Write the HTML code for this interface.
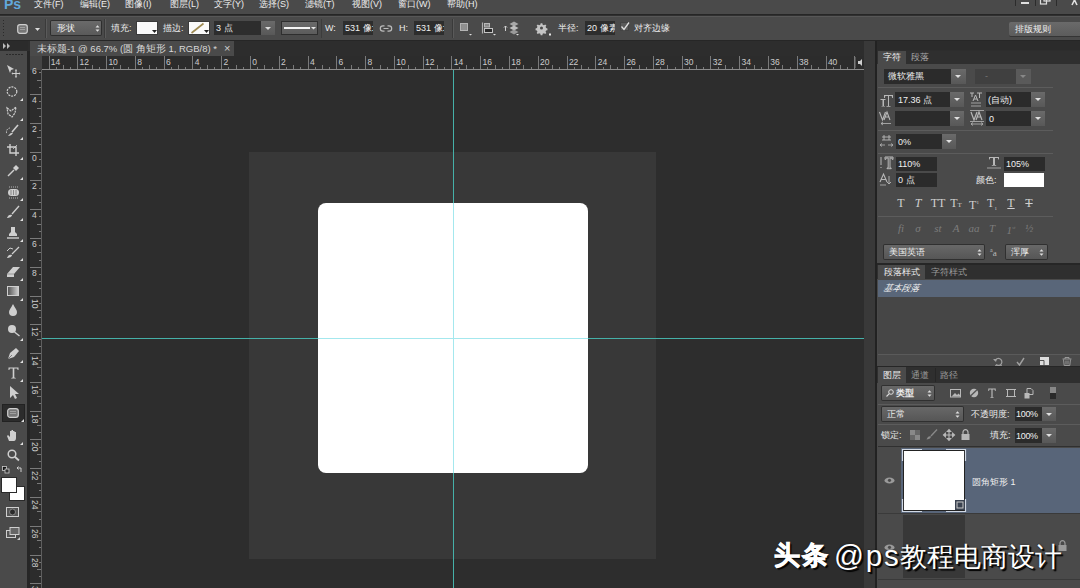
<!DOCTYPE html>
<html><head><meta charset="utf-8"><style>
*{margin:0;padding:0;box-sizing:border-box}
html,body{width:1080px;height:588px;overflow:hidden;background:#2d2d2d;font-family:"Liberation Sans",sans-serif;color:#d4d4d4;position:relative}
.a{position:absolute}
.t{position:absolute;white-space:nowrap;font-size:10px;line-height:12px;color:#d8d8d8}
svg.a{overflow:visible}
</style></head><body>
<div class="a" style="left:0px;top:0px;width:1080px;height:14px;background:#4a4a4a;"></div>
<div class="a" style="left:0px;top:14px;width:1080px;height:1px;background:#262626;"></div>
<div class="a" style="left:0px;top:15px;width:1080px;height:1px;background:#303030;"></div>
<div class="t" style="left:4px;top:-3px;font-size:14px;color:#62a8dc;font-weight:bold;line-height:14px;letter-spacing:0px">Ps</div>
<div class="t" style="left:34px;top:-2px;font-size:9px;color:#ececec;">文件(F)</div>
<div class="t" style="left:80px;top:-2px;font-size:9px;color:#ececec;">编辑(E)</div>
<div class="t" style="left:125px;top:-2px;font-size:9px;color:#ececec;">图像(I)</div>
<div class="t" style="left:170px;top:-2px;font-size:9px;color:#ececec;">图层(L)</div>
<div class="t" style="left:214px;top:-2px;font-size:9px;color:#ececec;">文字(Y)</div>
<div class="t" style="left:259px;top:-2px;font-size:9px;color:#ececec;">选择(S)</div>
<div class="t" style="left:305px;top:-2px;font-size:9px;color:#ececec;">滤镜(T)</div>
<div class="t" style="left:352px;top:-2px;font-size:9px;color:#ececec;">视图(V)</div>
<div class="t" style="left:398px;top:-2px;font-size:9px;color:#ececec;">窗口(W)</div>
<div class="t" style="left:447px;top:-2px;font-size:9px;color:#ececec;">帮助(H)</div>
<div class="a" style="left:1015px;top:0px;width:1px;height:6px;background:#2c2c2c;"></div>
<div class="a" style="left:1035px;top:0px;width:1px;height:6px;background:#2c2c2c;"></div>
<div class="a" style="left:1056px;top:0px;width:1px;height:6px;background:#2c2c2c;"></div>
<div class="a" style="left:1021px;top:2px;width:8px;height:2px;background:#e0e0e0;"></div>
<svg class="a" style="left:1040px;top:0px;" width="11" height="5" viewBox="0 0 11 5"><rect x="0.5" y="-2" width="6" height="6" fill="none" stroke="#ddd" stroke-width="1.2"/><rect x="4" y="-4" width="6" height="5" fill="none" stroke="#ddd" stroke-width="1.2"/></svg>
<svg class="a" style="left:1070px;top:0px;" width="9" height="5" viewBox="0 0 9 5"><path d="M0 -4 L4.5 0 L9 -4 M4.5 0 L2 5 M4.5 0 L7 5" stroke="#e0e0e0" stroke-width="1.6" fill="none"/></svg>
<div class="a" style="left:0px;top:16px;width:1080px;height:24px;background:#4a4a4a;"></div>
<div class="a" style="left:0px;top:16px;width:1080px;height:1px;background:#575757;"></div>
<div class="a" style="left:0px;top:40px;width:1080px;height:1px;background:#262626;"></div>
<div class="a" style="left:3px;top:20px;width:1px;height:1px;background:#2a2a2a;"></div>
<div class="a" style="left:3px;top:23px;width:1px;height:1px;background:#2a2a2a;"></div>
<div class="a" style="left:3px;top:26px;width:1px;height:1px;background:#2a2a2a;"></div>
<div class="a" style="left:3px;top:29px;width:1px;height:1px;background:#2a2a2a;"></div>
<div class="a" style="left:3px;top:32px;width:1px;height:1px;background:#2a2a2a;"></div>
<div class="a" style="left:3px;top:35px;width:1px;height:1px;background:#2a2a2a;"></div>
<svg class="a" style="left:17px;top:24px;" width="11" height="10" viewBox="0 0 11 10"><rect x="0.7" y="0.7" width="9.6" height="8.6" rx="2.2" fill="#777" stroke="#cfcfcf" stroke-width="1.2"/><path d="M3 3.5h5M3 5.5h5" stroke="#aaa" stroke-width="0.8"/></svg>
<svg class="a" style="left:35px;top:28px;" width="5" height="3" viewBox="0 0 5 3"><path d="M0 0h5l-2.5 3z" fill="#ddd"/></svg>
<div class="a" style="left:45px;top:19px;width:1px;height:19px;background:#3a3a3a;"></div>
<div class="a" style="left:46px;top:19px;width:1px;height:19px;background:#5a5a5a;"></div>
<div class="a" style="left:51px;top:21px;width:50px;height:14px;background:linear-gradient(#6a6a6a,#5a5a5a);border-radius:1px;box-shadow:0 0 0 1px #2e2e2e"></div>
<div class="t" style="left:57px;top:22px;font-size:9px;color:#efefef;">形状</div>
<svg class="a" style="left:95px;top:24px;" width="6" height="9" viewBox="0 0 6 9"><path d="M0.5 3.5h4L2.5 1.2zM0.5 5.5h4L2.5 7.8z" fill="#e0e0e0"/></svg>
<div class="a" style="left:104px;top:19px;width:1px;height:19px;background:#3a3a3a;"></div>
<div class="a" style="left:105px;top:19px;width:1px;height:19px;background:#5a5a5a;"></div>
<div class="t" style="left:111px;top:22px;font-size:9px;color:#ececec;">填充:</div>
<div class="a" style="left:137px;top:22px;width:20px;height:12px;background:#fafafa;box-shadow:0 0 0 1px #3a3a3a"></div>
<svg class="a" style="left:152px;top:30px;" width="5" height="3" viewBox="0 0 5 3"><path d="M0 0h5l-2.5 3z" fill="#222"/></svg>
<div class="t" style="left:163px;top:22px;font-size:9px;color:#ececec;">描边:</div>
<div class="a" style="left:189px;top:22px;width:20px;height:12px;background:#fafafa;box-shadow:0 0 0 1px #3a3a3a"></div>
<svg class="a" style="left:189px;top:22px;" width="20" height="12" viewBox="0 0 20 12"><path d="M2.5 11 L14.5 1.5" stroke="#9e8a52" stroke-width="1.6"/><path d="M15 8h5l-2.5 3z" fill="#222"/></svg>
<div class="a" style="left:214px;top:21px;width:47px;height:14px;background:#2d2d2d;"></div>
<div class="t" style="left:216px;top:22px;font-size:9px;color:#ececec;">3 点</div>
<div class="a" style="left:261px;top:21px;width:14px;height:14px;background:linear-gradient(#6a6a6a,#585858);"></div>
<svg class="a" style="left:265px;top:27px;" width="6" height="3" viewBox="0 0 6 3"><path d="M0 0h6l-3 3z" fill="#ddd"/></svg>
<div class="a" style="left:281px;top:21px;width:37px;height:14px;background:#2e2e2e;"></div>
<div class="a" style="left:282px;top:22px;width:35px;height:12px;background:linear-gradient(#6a6a6a,#5c5c5c);"></div>
<div class="a" style="left:284px;top:27px;width:26px;height:2px;background:#f4f4f4;"></div>
<svg class="a" style="left:311px;top:27px;" width="5" height="3" viewBox="0 0 5 3"><path d="M0 0h5l-2.5 2.5z" fill="#e6e6e6"/></svg>
<div class="a" style="left:321px;top:19px;width:1px;height:19px;background:#3c3c3c;"></div>
<div class="t" style="left:325px;top:22px;font-size:9px;color:#ececec;">W:</div>
<div class="a" style="left:343px;top:21px;width:30px;height:14px;background:#2d2d2d;"></div>
<div class="t" style="left:345px;top:22px;font-size:9px;color:#f0f0f0;width:28px;overflow:hidden">531 像:</div>
<svg class="a" style="left:380px;top:25px;" width="12" height="7" viewBox="0 0 12 7"><path d="M4.5 0.8H3A2.7 2.7 0 0 0 3 6.2H4.5M7.5 0.8H9A2.7 2.7 0 0 1 9 6.2H7.5M3.5 3.5H8.5" stroke="#bbb" stroke-width="1.2" fill="none"/></svg>
<div class="t" style="left:399px;top:22px;font-size:9px;color:#ececec;">H:</div>
<div class="a" style="left:414px;top:21px;width:30px;height:14px;background:#2d2d2d;"></div>
<div class="t" style="left:416px;top:22px;font-size:9px;color:#f0f0f0;width:28px;overflow:hidden">531 像:</div>
<div class="a" style="left:452px;top:19px;width:1px;height:19px;background:#3a3a3a;"></div>
<div class="a" style="left:453px;top:19px;width:1px;height:19px;background:#5a5a5a;"></div>
<svg class="a" style="left:459px;top:22px;" width="14" height="14" viewBox="0 0 14 14"><rect x="1.5" y="1.5" width="7" height="7" fill="#8c8c8c" stroke="#b4b4b4"/><path d="M4 2v6M6 2v6" stroke="#9c9c9c" stroke-width="0.6"/><path d="M10 12h3l-1.5 1.5z" fill="#e0e0e0"/></svg>
<svg class="a" style="left:481px;top:22px;" width="16" height="14" viewBox="0 0 16 14"><path d="M1.5 0.5v11" stroke="#b0b0b0" stroke-width="1.2"/><rect x="3.5" y="1.5" width="5" height="3.5" fill="#888" stroke="#b8b8b8"/><rect x="3.5" y="6.5" width="8" height="4" fill="#2a2a2a" stroke="#c4c4c4"/><path d="M12 12h3l-1.5 1.5z" fill="#e0e0e0"/></svg>
<svg class="a" style="left:503px;top:21px;" width="18" height="15" viewBox="0 0 18 15"><path d="M2.5 5v5M1 6.5l1.5-1.5 1.5 1.5" stroke="#cfcfcf" stroke-width="1" fill="none"/><path d="M11 0.5l4.5 2.5-4.5 2.5-4.5-2.5z" fill="#a8a8a8"/><path d="M11 4.5l4.5 2.5-4.5 2.5-4.5-2.5z" fill="#bdbdbd"/><path d="M11 8.5l4.5 2.5-4.5 2.5-4.5-2.5z" fill="#9a9a9a"/><path d="M13 13h3l-1.5 1.5z" fill="#e0e0e0"/></svg>
<svg class="a" style="left:535px;top:22px;" width="16" height="14" viewBox="0 0 16 14"><g transform="translate(6.5,6) scale(0.85)"><path d="M-1 -5.5h2l0.4 1.6 1.5 0.6 1.4-0.9 1.4 1.4-0.9 1.4 0.6 1.5 1.6 0.4v2l-1.6 0.4-0.6 1.5 0.9 1.4-1.4 1.4-1.4-0.9-1.5 0.6-0.4 1.6h-2l-0.4-1.6-1.5-0.6-1.4 0.9-1.4-1.4 0.9-1.4-0.6-1.5-1.6-0.4v-2l1.6-0.4 0.6-1.5-0.9-1.4 1.4-1.4 1.4 0.9 1.5-0.6z" fill="#c4c4c4"/><circle r="1.8" fill="#4a4a4a"/></g><rect x="14" y="11.5" width="2" height="2" fill="#e6e6e6"/></svg>
<div class="t" style="left:558px;top:22px;font-size:9px;color:#ececec;">半径:</div>
<div class="a" style="left:585px;top:21px;width:30px;height:14px;background:#2d2d2d;"></div>
<div class="t" style="left:587px;top:22px;font-size:9px;color:#f0f0f0;width:28px;overflow:hidden">20 像素</div>
<svg class="a" style="left:620px;top:22px;" width="10" height="10" viewBox="0 0 10 10"><rect x="0.5" y="0.5" width="8" height="8" fill="#5a5a5a" stroke="#444"/><path d="M1.5 4.5l2.5 3 5-7" stroke="#e0e0e0" stroke-width="1.3" fill="none"/></svg>
<div class="t" style="left:634px;top:22px;font-size:9px;color:#ececec;">对齐边缘</div>
<div class="a" style="left:1009px;top:22px;width:71px;height:14px;background:linear-gradient(#6a6a6a,#5c5c5c);border-radius:2px 0 0 2px;box-shadow:0 1px 0 #353535"></div>
<div class="t" style="left:1015px;top:23px;font-size:9px;color:#efefef;">排版规则</div>
<div class="a" style="left:0px;top:41px;width:1080px;height:15px;background:#2d2d2d;"></div>
<div class="a" style="left:0px;top:41px;width:28px;height:9px;background:#2b2b2b;"></div>
<svg class="a" style="left:3px;top:43px;" width="8" height="6" viewBox="0 0 8 6"><path d="M0 0l3 3-3 3zM4 0l3 3-3 3z" fill="#bbb"/></svg>
<div class="a" style="left:30px;top:41px;width:204px;height:15px;background:#4a4a4a;"></div>
<div class="t" style="left:37px;top:43px;font-size:9.5px;color:#d8d8d8;">未标题-1 @ 66.7% (圆 角矩形 1, RGB/8) *</div>
<div class="t" style="left:224px;top:42px;font-size:11px;color:#cfcfcf;">×</div>
<div class="a" style="left:0px;top:51px;width:27px;height:537px;background:#4a4a4a;"></div>
<div class="a" style="left:27px;top:51px;width:3px;height:537px;background:#262626;"></div>
<div class="a" style="left:6px;top:54px;width:2px;height:1px;background:#2a2a2a;"></div>
<div class="a" style="left:9px;top:54px;width:2px;height:1px;background:#2a2a2a;"></div>
<div class="a" style="left:12px;top:54px;width:2px;height:1px;background:#2a2a2a;"></div>
<div class="a" style="left:15px;top:54px;width:2px;height:1px;background:#2a2a2a;"></div>
<div class="a" style="left:18px;top:54px;width:2px;height:1px;background:#2a2a2a;"></div>
<div class="a" style="left:21px;top:54px;width:2px;height:1px;background:#2a2a2a;"></div>
<svg class="a" style="left:6px;top:64px;" width="15" height="13" viewBox="0 0 15 13"><path d="M1 1l7 4-3 1-1 3z" fill="#cfcfcf"/><path d="M10 6v7M6.5 9.5h7" stroke="#cfcfcf" stroke-width="1.1"/><path d="M10 5l-1.2 1.4h2.4zM10 14l-1.2-1.4h2.4zM5.5 9.5l1.4-1.2v2.4zM14.5 9.5l-1.4-1.2v2.4z" fill="#cfcfcf"/></svg>
<svg class="a" style="left:6px;top:86px;" width="12" height="11" viewBox="0 0 12 11"><ellipse cx="6" cy="5.5" rx="4.8" ry="4.6" fill="none" stroke="#cfcfcf" stroke-width="1.2" stroke-dasharray="2 1"/></svg>
<svg class="a" style="left:20px;top:98px;" width="3" height="3" viewBox="0 0 3 3"><path d="M3 0v3H0z" fill="#e0e0e0"/></svg>
<svg class="a" style="left:6px;top:106px;" width="12" height="12" viewBox="0 0 12 12"><path d="M1 2l4 3 5-4-1 6-3 4-4-3z" fill="none" stroke="#cfcfcf" stroke-width="1.2" stroke-dasharray="2.2 0.8"/></svg>
<svg class="a" style="left:20px;top:118px;" width="3" height="3" viewBox="0 0 3 3"><path d="M3 0v3H0z" fill="#e0e0e0"/></svg>
<svg class="a" style="left:6px;top:124px;" width="14" height="13" viewBox="0 0 14 13"><path d="M4 4a4 4 0 0 0-3 6" fill="none" stroke="#cfcfcf" stroke-width="1" stroke-dasharray="1.5 1"/><path d="M12 1L6 8" stroke="#cfcfcf" stroke-width="1.6"/><path d="M2 12c2-3 4-4 5-3-1 2-3 3-5 3z" fill="#cfcfcf"/></svg>
<svg class="a" style="left:20px;top:137px;" width="3" height="3" viewBox="0 0 3 3"><path d="M3 0v3H0z" fill="#e0e0e0"/></svg>
<svg class="a" style="left:7px;top:144px;" width="12" height="13" viewBox="0 0 12 13"><path d="M3 0v9h9M0 3h9v9" stroke="#cfcfcf" stroke-width="1.4" fill="none"/><path d="M10 1l-4 4" stroke="#cfcfcf" stroke-width="0.8"/></svg>
<svg class="a" style="left:20px;top:157px;" width="3" height="3" viewBox="0 0 3 3"><path d="M3 0v3H0z" fill="#e0e0e0"/></svg>
<svg class="a" style="left:7px;top:164px;" width="12" height="13" viewBox="0 0 12 13"><path d="M1 12l6-6" stroke="#cfcfcf" stroke-width="1.5"/><path d="M6 4l3 3 3-3-3-3z" fill="#cfcfcf"/></svg>
<svg class="a" style="left:20px;top:177px;" width="3" height="3" viewBox="0 0 3 3"><path d="M3 0v3H0z" fill="#e0e0e0"/></svg>
<svg class="a" style="left:7px;top:187px;" width="13" height="11" viewBox="0 0 13 11"><rect x="1" y="2" width="11" height="7" rx="3.5" fill="#cfcfcf"/><path d="M4 3v5M6.5 3v5M9 3v5" stroke="#777" stroke-width="0.8"/><path d="M2 0h9M2 11h9" stroke="#cfcfcf" stroke-width="0.8" stroke-dasharray="1 1"/></svg>
<svg class="a" style="left:20px;top:198px;" width="3" height="3" viewBox="0 0 3 3"><path d="M3 0v3H0z" fill="#e0e0e0"/></svg>
<svg class="a" style="left:6px;top:206px;" width="14" height="13" viewBox="0 0 14 13"><path d="M13 0L6 8" stroke="#cfcfcf" stroke-width="1.3"/><path d="M1 12c1-3 3-4 5-3 0 2-3 3-5 3z" fill="#cfcfcf"/></svg>
<svg class="a" style="left:20px;top:218px;" width="3" height="3" viewBox="0 0 3 3"><path d="M3 0v3H0z" fill="#e0e0e0"/></svg>
<svg class="a" style="left:6px;top:227px;" width="14" height="13" viewBox="0 0 14 13"><path d="M5 0h4v5l2 2v2H3V7l2-2z" fill="#cfcfcf"/><path d="M1 11h12" stroke="#cfcfcf" stroke-width="1.4"/></svg>
<svg class="a" style="left:20px;top:239px;" width="3" height="3" viewBox="0 0 3 3"><path d="M3 0v3H0z" fill="#e0e0e0"/></svg>
<svg class="a" style="left:6px;top:246px;" width="14" height="13" viewBox="0 0 14 13"><path d="M13 1L6 8" stroke="#cfcfcf" stroke-width="1.3"/><path d="M1 12c1-3 3-4 5-3 0 2-3 3-5 3z" fill="#cfcfcf"/><path d="M1 5l3-3 3 1" stroke="#cfcfcf" stroke-width="1" fill="none"/></svg>
<svg class="a" style="left:20px;top:258px;" width="3" height="3" viewBox="0 0 3 3"><path d="M3 0v3H0z" fill="#e0e0e0"/></svg>
<svg class="a" style="left:6px;top:266px;" width="14" height="11" viewBox="0 0 14 11"><path d="M1 8l6-7h7l-6 7v3H1z" fill="#cfcfcf"/><path d="M1 8h7" stroke="#888" stroke-width="0.8"/></svg>
<svg class="a" style="left:20px;top:278px;" width="3" height="3" viewBox="0 0 3 3"><path d="M3 0v3H0z" fill="#e0e0e0"/></svg>
<div class="a" style="left:7px;top:286px;width:12px;height:10px;background:linear-gradient(90deg,#555,#ccc);border:1px solid #cfcfcf"></div>
<svg class="a" style="left:20px;top:298px;" width="3" height="3" viewBox="0 0 3 3"><path d="M3 0v3H0z" fill="#e0e0e0"/></svg>
<svg class="a" style="left:8px;top:304px;" width="10" height="12" viewBox="0 0 10 12"><path d="M5 0c2 4 4 6 4 8a4 4 0 0 1-8 0c0-2 2-4 4-8z" fill="#cfcfcf"/></svg>
<svg class="a" style="left:7px;top:324px;" width="13" height="13" viewBox="0 0 13 13"><circle cx="5" cy="5" r="4" fill="#cfcfcf"/><path d="M7.5 8l5 4" stroke="#cfcfcf" stroke-width="1.4"/></svg>
<svg class="a" style="left:20px;top:338px;" width="3" height="3" viewBox="0 0 3 3"><path d="M3 0v3H0z" fill="#e0e0e0"/></svg>
<svg class="a" style="left:7px;top:347px;" width="13" height="13" viewBox="0 0 13 13"><path d="M1 12l2-6 6-5 3 3-5 6z" fill="#cfcfcf"/><path d="M1 12l4-4" stroke="#666" stroke-width="0.8"/></svg>
<svg class="a" style="left:20px;top:360px;" width="3" height="3" viewBox="0 0 3 3"><path d="M3 0v3H0z" fill="#e0e0e0"/></svg>
<svg class="a" style="left:8px;top:367px;" width="11" height="12" viewBox="0 0 11 12"><path d="M0.5 0.5h10v2.5h-0.8l-0.6-1.5H6.3V10.5L7.8 11v0.6H3.2V11l1.5-0.5V1.5H1.9L1.3 3H0.5z" fill="#cfcfcf"/></svg>
<svg class="a" style="left:20px;top:379px;" width="3" height="3" viewBox="0 0 3 3"><path d="M3 0v3H0z" fill="#e0e0e0"/></svg>
<svg class="a" style="left:9px;top:386px;" width="10" height="13" viewBox="0 0 10 13"><path d="M1 0v12l3-3 2 4 2-1-2-4h4z" fill="#cfcfcf"/></svg>
<div class="a" style="left:2px;top:404px;width:23px;height:18px;background:#2c2c2c;border:1px solid #222"></div>
<svg class="a" style="left:7px;top:408px;" width="12" height="10" viewBox="0 0 12 10"><rect x="0.7" y="0.7" width="10.6" height="8.6" rx="2.4" fill="#777" stroke="#cfcfcf" stroke-width="1.2"/><path d="M3 3.5h6M3 5.5h6" stroke="#aaa" stroke-width="0.8"/></svg>
<svg class="a" style="left:21px;top:419px;" width="3" height="3" viewBox="0 0 3 3"><path d="M3 0v3H0z" fill="#e0e0e0"/></svg>
<svg class="a" style="left:6px;top:429px;" width="13" height="13" viewBox="0 0 13 13"><path d="M3 12L1 7l1-1 2 2V2h1.5v5V1h1.5v6V2h1.5v5V3h1.5v6c0 2-1 3-2 3z" fill="#cfcfcf"/></svg>
<svg class="a" style="left:20px;top:442px;" width="3" height="3" viewBox="0 0 3 3"><path d="M3 0v3H0z" fill="#e0e0e0"/></svg>
<svg class="a" style="left:7px;top:449px;" width="13" height="12" viewBox="0 0 13 12"><circle cx="5" cy="5" r="3.8" fill="none" stroke="#cfcfcf" stroke-width="1.5"/><path d="M7.8 7.8L12 11.5" stroke="#cfcfcf" stroke-width="1.8"/></svg>
<svg class="a" style="left:2px;top:466px;" width="24" height="9" viewBox="0 0 24 9"><rect x="0.5" y="0.5" width="4" height="4" fill="#111" stroke="#ccc" stroke-width="0.8"/><rect x="3" y="3" width="4" height="4" fill="#333" stroke="#ccc" stroke-width="0.8"/><path d="M15 2h4v4M15 2l1.5-1.5M15 2l1.5 1.5" stroke="#ccc" stroke-width="1" fill="none"/></svg>
<div class="a" style="left:10px;top:487px;width:14px;height:13px;background:#ffffff;box-shadow:0 0 0 1px #2a2a2a"></div>
<div class="a" style="left:2px;top:478px;width:14px;height:14px;background:#ffffff;box-shadow:0 0 0 1px #2a2a2a"></div>
<svg class="a" style="left:6px;top:507px;" width="13" height="10" viewBox="0 0 13 10"><rect x="0.5" y="0.5" width="12" height="9" fill="#555" stroke="#cfcfcf"/><circle cx="6.5" cy="5" r="3" fill="#2a2a2a" stroke="#999" stroke-width="0.8"/></svg>
<svg class="a" style="left:6px;top:527px;" width="14" height="13" viewBox="0 0 14 13"><rect x="0.5" y="3.5" width="9" height="7" fill="#555" stroke="#cfcfcf"/><rect x="4" y="0.5" width="9" height="7" fill="#666" stroke="#cfcfcf"/><path d="M14 10v3h-3z" fill="#ccc"/></svg>
<div class="a" style="left:30px;top:56px;width:12px;height:14px;background:#454545;"></div>
<div class="a" style="left:42px;top:56px;width:822px;height:14px;background:#2c2c2c;"></div>
<div class="a" style="left:42px;top:69px;width:822px;height:1px;background:#8c8c8c;"></div>
<div class="a" style="left:30px;top:70px;width:12px;height:518px;background:#2c2c2c;"></div>
<div class="a" style="left:41px;top:70px;width:1px;height:518px;background:#5e5e5e;"></div>
<svg class="a" style="left:42px;top:56px;" width="822" height="14" viewBox="0 0 822 14"><path d="M7.5 0v13 M14.5 11v2 M21.5 9v4 M28.5 11v2 M35.5 0v13 M43.5 11v2 M50.5 9v4 M57.5 11v2 M64.5 0v13 M71.5 11v2 M78.5 9v4 M86.5 11v2 M93.5 0v13 M100.5 11v2 M107.5 9v4 M114.5 11v2 M122.5 0v13 M129.5 11v2 M136.5 9v4 M143.5 11v2 M150.5 0v13 M158.5 11v2 M165.5 9v4 M172.5 11v2 M179.5 0v13 M186.5 11v2 M194.5 9v4 M201.5 11v2 M208.5 0v13 M215.5 11v2 M222.5 9v4 M230.5 11v2 M237.5 0v13 M244.5 11v2 M251.5 9v4 M258.5 11v2 M266.5 0v13 M273.5 11v2 M280.5 9v4 M287.5 11v2 M294.5 0v13 M302.5 11v2 M309.5 9v4 M316.5 11v2 M323.5 0v13 M330.5 11v2 M338.5 9v4 M345.5 11v2 M352.5 0v13 M359.5 11v2 M366.5 9v4 M373.5 11v2 M381.5 0v13 M388.5 11v2 M395.5 9v4 M402.5 11v2 M409.5 0v13 M417.5 11v2 M424.5 9v4 M431.5 11v2 M438.5 0v13 M445.5 11v2 M453.5 9v4 M460.5 11v2 M467.5 0v13 M474.5 11v2 M481.5 9v4 M489.5 11v2 M496.5 0v13 M503.5 11v2 M510.5 9v4 M517.5 11v2 M525.5 0v13 M532.5 11v2 M539.5 9v4 M546.5 11v2 M553.5 0v13 M561.5 11v2 M568.5 9v4 M575.5 11v2 M582.5 0v13 M589.5 11v2 M597.5 9v4 M604.5 11v2 M611.5 0v13 M618.5 11v2 M625.5 9v4 M633.5 11v2 M640.5 0v13 M647.5 11v2 M654.5 9v4 M661.5 11v2 M668.5 0v13 M676.5 11v2 M683.5 9v4 M690.5 11v2 M697.5 0v13 M704.5 11v2 M712.5 9v4 M719.5 11v2 M726.5 0v13 M733.5 11v2 M740.5 9v4 M748.5 11v2 M755.5 0v13 M762.5 11v2 M769.5 9v4 M776.5 11v2 M784.5 0v13 M791.5 11v2 M798.5 9v4 M805.5 11v2 M812.5 0v13 M820.5 11v2" stroke="#7a7a7a" stroke-width="1"/></svg>
<div class="a" style="left:42px;top:56px;width:822px;height:13px;overflow:hidden">
<div class="t" style="left:8.799999999999997px;top:2px;font-size:8.5px;line-height:9px;color:#cccccc">14</div>
<div class="t" style="left:37.599999999999994px;top:2px;font-size:8.5px;line-height:9px;color:#cccccc">12</div>
<div class="t" style="left:66.4px;top:2px;font-size:8.5px;line-height:9px;color:#cccccc">10</div>
<div class="t" style="left:95.19999999999999px;top:2px;font-size:8.5px;line-height:9px;color:#cccccc">8</div>
<div class="t" style="left:124.0px;top:2px;font-size:8.5px;line-height:9px;color:#cccccc">6</div>
<div class="t" style="left:152.7px;top:2px;font-size:8.5px;line-height:9px;color:#cccccc">4</div>
<div class="t" style="left:181.5px;top:2px;font-size:8.5px;line-height:9px;color:#cccccc">2</div>
<div class="t" style="left:210.3px;top:2px;font-size:8.5px;line-height:9px;color:#cccccc">0</div>
<div class="t" style="left:239.10000000000002px;top:2px;font-size:8.5px;line-height:9px;color:#cccccc">2</div>
<div class="t" style="left:267.9px;top:2px;font-size:8.5px;line-height:9px;color:#cccccc">4</div>
<div class="t" style="left:296.6px;top:2px;font-size:8.5px;line-height:9px;color:#cccccc">6</div>
<div class="t" style="left:325.4px;top:2px;font-size:8.5px;line-height:9px;color:#cccccc">8</div>
<div class="t" style="left:354.2px;top:2px;font-size:8.5px;line-height:9px;color:#cccccc">10</div>
<div class="t" style="left:383.0px;top:2px;font-size:8.5px;line-height:9px;color:#cccccc">12</div>
<div class="t" style="left:411.8px;top:2px;font-size:8.5px;line-height:9px;color:#cccccc">14</div>
<div class="t" style="left:440.5px;top:2px;font-size:8.5px;line-height:9px;color:#cccccc">16</div>
<div class="t" style="left:469.3px;top:2px;font-size:8.5px;line-height:9px;color:#cccccc">18</div>
<div class="t" style="left:498.1px;top:2px;font-size:8.5px;line-height:9px;color:#cccccc">20</div>
<div class="t" style="left:526.9px;top:2px;font-size:8.5px;line-height:9px;color:#cccccc">22</div>
<div class="t" style="left:555.7px;top:2px;font-size:8.5px;line-height:9px;color:#cccccc">24</div>
<div class="t" style="left:584.4px;top:2px;font-size:8.5px;line-height:9px;color:#cccccc">26</div>
<div class="t" style="left:613.2px;top:2px;font-size:8.5px;line-height:9px;color:#cccccc">28</div>
<div class="t" style="left:642.0px;top:2px;font-size:8.5px;line-height:9px;color:#cccccc">30</div>
<div class="t" style="left:670.8px;top:2px;font-size:8.5px;line-height:9px;color:#cccccc">32</div>
<div class="t" style="left:699.6px;top:2px;font-size:8.5px;line-height:9px;color:#cccccc">34</div>
<div class="t" style="left:728.3px;top:2px;font-size:8.5px;line-height:9px;color:#cccccc">36</div>
<div class="t" style="left:757.1px;top:2px;font-size:8.5px;line-height:9px;color:#cccccc">38</div>
<div class="t" style="left:785.9px;top:2px;font-size:8.5px;line-height:9px;color:#cccccc">40</div>
<div class="t" style="left:814.7px;top:2px;font-size:8.5px;line-height:9px;color:#cccccc">42</div>
</div>
<svg class="a" style="left:30px;top:70px;" width="12" height="518" viewBox="0 0 12 518"><path d="M9 2.5h2 M7 10.5h4 M9 17.5h2 M0 24.5h11 M9 31.5h2 M7 38.5h4 M9 46.5h2 M0 53.5h11 M9 60.5h2 M7 67.5h4 M9 74.5h2 M0 82.5h11 M9 89.5h2 M7 96.5h4 M9 103.5h2 M0 110.5h11 M9 118.5h2 M7 125.5h4 M9 132.5h2 M0 139.5h11 M9 146.5h2 M7 154.5h4 M9 161.5h2 M0 168.5h11 M9 175.5h2 M7 182.5h4 M9 190.5h2 M0 197.5h11 M9 204.5h2 M7 211.5h4 M9 218.5h2 M0 226.5h11 M9 233.5h2 M7 240.5h4 M9 247.5h2 M0 254.5h11 M9 261.5h2 M7 269.5h4 M9 276.5h2 M0 283.5h11 M9 290.5h2 M7 297.5h4 M9 305.5h2 M0 312.5h11 M9 319.5h2 M7 326.5h4 M9 333.5h2 M0 341.5h11 M9 348.5h2 M7 355.5h4 M9 362.5h2 M0 369.5h11 M9 377.5h2 M7 384.5h4 M9 391.5h2 M0 398.5h11 M9 405.5h2 M7 413.5h4 M9 420.5h2 M0 427.5h11 M9 434.5h2 M7 441.5h4 M9 449.5h2 M0 456.5h11 M9 463.5h2 M7 470.5h4 M9 477.5h2 M0 485.5h11 M9 492.5h2 M7 499.5h4 M9 506.5h2 M0 513.5h11" stroke="#7a7a7a" stroke-width="1"/></svg>
<div class="t" style="left:32px;top:67px;font-size:8.5px;line-height:8px;color:#cccccc">6</div>
<div class="t" style="left:32px;top:96px;font-size:8.5px;line-height:8px;color:#cccccc">4</div>
<div class="t" style="left:32px;top:125px;font-size:8.5px;line-height:8px;color:#cccccc">2</div>
<div class="t" style="left:32px;top:154px;font-size:8.5px;line-height:8px;color:#cccccc">0</div>
<div class="t" style="left:32px;top:182px;font-size:8.5px;line-height:8px;color:#cccccc">2</div>
<div class="t" style="left:32px;top:211px;font-size:8.5px;line-height:8px;color:#cccccc">4</div>
<div class="t" style="left:32px;top:240px;font-size:8.5px;line-height:8px;color:#cccccc">6</div>
<div class="t" style="left:32px;top:269px;font-size:8.5px;line-height:8px;color:#cccccc">8</div>
<div class="t" style="left:31px;top:299px;font-size:8.5px;line-height:8px;color:#cccccc;writing-mode:vertical-rl">10</div>
<div class="t" style="left:31px;top:327px;font-size:8.5px;line-height:8px;color:#cccccc;writing-mode:vertical-rl">12</div>
<div class="t" style="left:31px;top:356px;font-size:8.5px;line-height:8px;color:#cccccc;writing-mode:vertical-rl">14</div>
<div class="t" style="left:31px;top:385px;font-size:8.5px;line-height:8px;color:#cccccc;writing-mode:vertical-rl">16</div>
<div class="t" style="left:31px;top:414px;font-size:8.5px;line-height:8px;color:#cccccc;writing-mode:vertical-rl">18</div>
<div class="t" style="left:31px;top:442px;font-size:8.5px;line-height:8px;color:#cccccc;writing-mode:vertical-rl">20</div>
<div class="t" style="left:31px;top:471px;font-size:8.5px;line-height:8px;color:#cccccc;writing-mode:vertical-rl">22</div>
<div class="t" style="left:31px;top:500px;font-size:8.5px;line-height:8px;color:#cccccc;writing-mode:vertical-rl">24</div>
<div class="t" style="left:31px;top:529px;font-size:8.5px;line-height:8px;color:#cccccc;writing-mode:vertical-rl">26</div>
<div class="t" style="left:31px;top:558px;font-size:8.5px;line-height:8px;color:#cccccc;writing-mode:vertical-rl">28</div>
<div class="t" style="left:31px;top:586px;font-size:8.5px;line-height:8px;color:#cccccc;writing-mode:vertical-rl">30</div>
<div class="t" style="left:31px;top:615px;font-size:8.5px;line-height:8px;color:#cccccc;writing-mode:vertical-rl">32</div>
<div class="a" style="left:864px;top:41px;width:12px;height:547px;background:#393939;"></div>
<div class="a" style="left:875px;top:41px;width:2px;height:547px;background:#222222;"></div>
<div class="a" style="left:249px;top:152px;width:407px;height:407px;background:#383838;"></div>
<div class="a" style="left:318px;top:203px;width:270px;height:270px;background:#ffffff;border-radius:8px"></div>
<div class="a" style="left:42px;top:338px;width:822px;height:1px;background:#45b0a8;"></div>
<div class="a" style="left:318px;top:338px;width:270px;height:1px;background:#a4e8ee;"></div>
<div class="a" style="left:453px;top:70px;width:1px;height:518px;background:#45b0a8;"></div>
<div class="a" style="left:453px;top:203px;width:1px;height:270px;background:#a4e8ee;"></div>
<div class="a" style="left:855px;top:56px;width:9px;height:13px;background:#2c2c2c;"></div>
<div class="a" style="left:855px;top:57px;width:1px;height:11px;background:#555;"></div>
<svg class="a" style="left:857px;top:59px;" width="7" height="7" viewBox="0 0 7 7"><path d="M1 2h2l2-2v7l-2-2H1z" fill="#cfcfcf"/></svg>
<div class="a" style="left:877px;top:41px;width:203px;height:9px;background:#2b2b2b;"></div>
<div class="a" style="left:877px;top:51px;width:203px;height:537px;background:#4a4a4a;"></div>
<div class="a" style="left:877px;top:51px;width:203px;height:13px;background:#2f2f2f;"></div>
<div class="a" style="left:878px;top:51px;width:28px;height:13px;background:#4a4a4a;"></div>
<div class="t" style="left:883px;top:51px;font-size:9px;color:#ececec;">字符</div>
<div class="t" style="left:911px;top:51px;font-size:9px;color:#a8a8a8;">段落</div>
<div class="a" style="left:884px;top:69px;width:67px;height:15px;background:#2b2b2b;"></div>
<div class="t" style="left:888px;top:70px;font-size:9px;color:#ececec;">微软雅黑</div>
<div class="a" style="left:951px;top:69px;width:15px;height:15px;background:linear-gradient(#6a6a6a,#585858);"></div>
<svg class="a" style="left:955px;top:75px;" width="6" height="3" viewBox="0 0 6 3"><path d="M0 0h6l-3 3z" fill="#e0e0e0"/></svg>
<div class="a" style="left:975px;top:69px;width:41px;height:15px;background:#404040;"></div>
<div class="t" style="left:985px;top:70px;font-size:9px;color:#777;">-</div>
<div class="a" style="left:1016px;top:69px;width:15px;height:15px;background:#5a5a5a;"></div>
<svg class="a" style="left:1020px;top:75px;" width="6" height="3" viewBox="0 0 6 3"><path d="M0 0h6l-3 3z" fill="#888"/></svg>
<div class="a" style="left:878px;top:87px;width:175px;height:1px;background:#5c5c5c;"></div>
<svg class="a" style="left:880px;top:94px;" width="13" height="13" viewBox="0 0 13 13"><path d="M0.5 5h5v1H4v6h1v0.5H1.5V12h1V6H0.5z" fill="#b8b8b8"/><path d="M4 1h9v3h-0.8l-0.5-2H9v10h1.5v0.8H6.5V12H8V2H5.3l-0.5 2H4z" fill="#b8b8b8"/></svg>
<div class="a" style="left:895px;top:92px;width:55px;height:15px;background:#2b2b2b;"></div>
<div class="t" style="left:898px;top:94px;font-size:9px;color:#f0f0f0;">17.36 点</div>
<div class="a" style="left:950px;top:92px;width:14px;height:15px;background:linear-gradient(#6a6a6a,#585858);"></div>
<svg class="a" style="left:954px;top:98px;" width="6" height="3" viewBox="0 0 6 3"><path d="M0 0h6l-3 3z" fill="#e0e0e0"/></svg>
<svg class="a" style="left:969px;top:92px;" width="14" height="15" viewBox="0 0 14 15"><path d="M1 1h4M3 1v4M8 1h5M10.5 1v5M4 9l2.5-6 2.5 6M5 7h3" stroke="#b8b8b8" stroke-width="1" fill="none"/><path d="M2 11h10M2 14h10" stroke="#b8b8b8" stroke-width="0.8"/></svg>
<div class="a" style="left:986px;top:92px;width:45px;height:15px;background:#2b2b2b;"></div>
<div class="t" style="left:988px;top:94px;font-size:9px;color:#f0f0f0;">(自动)</div>
<div class="a" style="left:1031px;top:92px;width:14px;height:15px;background:linear-gradient(#6a6a6a,#585858);"></div>
<svg class="a" style="left:1035px;top:98px;" width="6" height="3" viewBox="0 0 6 3"><path d="M0 0h6l-3 3z" fill="#e0e0e0"/></svg>
<svg class="a" style="left:879px;top:111px;" width="14" height="15" viewBox="0 0 14 15"><path d="M0.5 1l3 8 3-8M5 9l3-8 3 8M6.5 6h3" stroke="#b8b8b8" stroke-width="1.1" fill="none"/><path d="M2 12.5h10M2 12.5l2-1.5M2 12.5l2 1.5" stroke="#b8b8b8" stroke-width="0.8" fill="none"/></svg>
<div class="a" style="left:895px;top:111px;width:55px;height:15px;background:#2b2b2b;"></div>
<div class="a" style="left:950px;top:111px;width:14px;height:15px;background:linear-gradient(#6a6a6a,#585858);"></div>
<svg class="a" style="left:954px;top:117px;" width="6" height="3" viewBox="0 0 6 3"><path d="M0 0h6l-3 3z" fill="#e0e0e0"/></svg>
<svg class="a" style="left:970px;top:110px;" width="14" height="16" viewBox="0 0 14 16"><path d="M0 0.5h14" stroke="#b8b8b8" stroke-width="0.8"/><path d="M1 2l3 8 3-8M6 10l3-8 3 8M7.5 7h3" stroke="#b8b8b8" stroke-width="1.2" fill="none"/><path d="M0 11.5h14M1 14h12M1 14l2-1.5M1 14l2 1.5M13 14l-2-1.5M13 14l-2 1.5" stroke="#b8b8b8" stroke-width="0.8" fill="none"/></svg>
<div class="a" style="left:986px;top:111px;width:45px;height:15px;background:#2b2b2b;"></div>
<div class="t" style="left:989px;top:113px;font-size:9px;color:#f0f0f0;">0</div>
<div class="a" style="left:1031px;top:111px;width:14px;height:15px;background:linear-gradient(#6a6a6a,#585858);"></div>
<svg class="a" style="left:1035px;top:117px;" width="6" height="3" viewBox="0 0 6 3"><path d="M0 0h6l-3 3z" fill="#e0e0e0"/></svg>
<div class="a" style="left:878px;top:130px;width:175px;height:1px;background:#5c5c5c;"></div>
<svg class="a" style="left:880px;top:134px;" width="13" height="14" viewBox="0 0 13 14"><path d="M2 3h9M4 1v5M9 1v5M2 6h9" stroke="#b8b8b8" stroke-width="0.9" fill="none"/><path d="M0 11h5M0 11l2-1.5M0 11l2 1.5M13 11H8M13 11l-2-1.5M13 11l-2 1.5" stroke="#b8b8b8" stroke-width="0.8" fill="none"/></svg>
<div class="a" style="left:896px;top:134px;width:46px;height:15px;background:#2b2b2b;"></div>
<div class="t" style="left:898px;top:136px;font-size:9px;color:#f0f0f0;">0%</div>
<div class="a" style="left:942px;top:134px;width:14px;height:15px;background:linear-gradient(#6a6a6a,#585858);"></div>
<svg class="a" style="left:946px;top:140px;" width="6" height="3" viewBox="0 0 6 3"><path d="M0 0h6l-3 3z" fill="#e0e0e0"/></svg>
<div class="a" style="left:878px;top:153px;width:175px;height:1px;background:#5c5c5c;"></div>
<svg class="a" style="left:880px;top:156px;" width="13" height="14" viewBox="0 0 13 14"><path d="M1 1v8M1 11v1M5 1h8v2.5h-0.7l-0.4-1.5H10v10h1.2v0.7H7v-0.7h1.2V2H6.1l-0.4 1.5H5z" fill="none" stroke="#b8b8b8" stroke-width="1"/></svg>
<div class="a" style="left:896px;top:157px;width:41px;height:14px;background:#2b2b2b;"></div>
<div class="t" style="left:898px;top:158px;font-size:9px;color:#f0f0f0;">110%</div>
<svg class="a" style="left:987px;top:156px;" width="14" height="14" viewBox="0 0 14 14"><path d="M2 1h10v2.5h-0.7l-0.4-1.5H8v7h1.2v0.7H4.8V9H6V2H3.1l-0.4 1.5H2z" fill="#b8b8b8"/><path d="M0 12h14" stroke="#b8b8b8" stroke-width="0.8"/></svg>
<div class="a" style="left:1004px;top:157px;width:41px;height:14px;background:#2b2b2b;"></div>
<div class="t" style="left:1006px;top:158px;font-size:9px;color:#f0f0f0;">105%</div>
<svg class="a" style="left:879px;top:173px;" width="14" height="15" viewBox="0 0 14 15"><path d="M1 9l3.5-8 3.5 8M2.3 6.5h4.5" stroke="#b8b8b8" stroke-width="1.1" fill="none"/><path d="M10 3v8M8 9l2 2 2-2" stroke="#b8b8b8" stroke-width="0.9" fill="none"/><path d="M1 12h6" stroke="#b8b8b8" stroke-width="0.8"/></svg>
<div class="a" style="left:896px;top:173px;width:41px;height:14px;background:#2b2b2b;"></div>
<div class="t" style="left:898px;top:174px;font-size:9px;color:#f0f0f0;">0 点</div>
<div class="t" style="left:976px;top:174px;font-size:9px;color:#ececec;">颜色:</div>
<div class="a" style="left:1004px;top:173px;width:40px;height:14px;background:#ffffff;"></div>
<div class="t" style="left:891px;top:197px;width:20px;text-align:center;font-family:'Liberation Serif',serif;font-size:12px;line-height:12px;color:#d0d0d0;">T</div>
<div class="t" style="left:908px;top:197px;width:20px;text-align:center;font-family:'Liberation Serif',serif;font-size:12px;line-height:12px;color:#d0d0d0;font-style:italic">T</div>
<div class="t" style="left:928px;top:197px;width:20px;text-align:center;font-family:'Liberation Serif',serif;font-size:12px;line-height:12px;color:#d0d0d0;">TT</div>
<div class="t" style="left:946px;top:197px;width:20px;text-align:center;font-family:'Liberation Serif',serif;font-size:12px;line-height:12px;color:#d0d0d0;">T<span style="font-size:7px">T</span></div>
<div class="t" style="left:964px;top:197px;width:20px;text-align:center;font-family:'Liberation Serif',serif;font-size:12px;line-height:12px;color:#d0d0d0;">T<sup style="font-size:5px">1</sup></div>
<div class="t" style="left:982px;top:197px;width:20px;text-align:center;font-family:'Liberation Serif',serif;font-size:12px;line-height:12px;color:#d0d0d0;">T<sub style="font-size:5px">1</sub></div>
<div class="t" style="left:1001px;top:197px;width:20px;text-align:center;font-family:'Liberation Serif',serif;font-size:12px;line-height:12px;color:#d0d0d0;"><u>T</u></div>
<div class="t" style="left:1019px;top:197px;width:20px;text-align:center;font-family:'Liberation Serif',serif;font-size:12px;line-height:12px;color:#d0d0d0;"><s>T</s></div>
<div class="a" style="left:878px;top:216px;width:175px;height:1px;background:#5c5c5c;"></div>
<div class="t" style="left:891px;top:222px;width:20px;text-align:center;font-family:'Liberation Serif',serif;font-size:11px;line-height:12px;color:#7c7c7c;font-style:italic">fi</div>
<div class="t" style="left:908px;top:222px;width:20px;text-align:center;font-family:'Liberation Serif',serif;font-size:11px;line-height:12px;color:#7c7c7c;font-style:italic">σ</div>
<div class="t" style="left:928px;top:222px;width:20px;text-align:center;font-family:'Liberation Serif',serif;font-size:11px;line-height:12px;color:#7c7c7c;font-style:italic">st</div>
<div class="t" style="left:946px;top:222px;width:20px;text-align:center;font-family:'Liberation Serif',serif;font-size:11px;line-height:12px;color:#7c7c7c;font-style:italic">A</div>
<div class="t" style="left:964px;top:222px;width:20px;text-align:center;font-family:'Liberation Serif',serif;font-size:11px;line-height:12px;color:#7c7c7c;font-style:italic">aa</div>
<div class="t" style="left:982px;top:222px;width:20px;text-align:center;font-family:'Liberation Serif',serif;font-size:11px;line-height:12px;color:#7c7c7c;font-style:italic">T</div>
<div class="t" style="left:1001px;top:222px;width:20px;text-align:center;font-family:'Liberation Serif',serif;font-size:11px;line-height:12px;color:#7c7c7c;font-style:italic">1<sup style="font-size:5px">st</sup></div>
<div class="t" style="left:1019px;top:222px;width:20px;text-align:center;font-family:'Liberation Serif',serif;font-size:11px;line-height:12px;color:#7c7c7c;font-style:italic">½</div>
<div class="a" style="left:884px;top:245px;width:100px;height:14px;background:linear-gradient(#686868,#565656);border-radius:1px;box-shadow:0 0 0 1px #303030"></div>
<div class="t" style="left:889px;top:246px;font-size:9px;color:#ececec;">美国英语</div>
<svg class="a" style="left:977px;top:248px;" width="6" height="9" viewBox="0 0 6 9"><path d="M0.5 3.5h4L2.5 1.2zM0.5 5.5h4L2.5 7.8z" fill="#e0e0e0"/></svg>
<div class="t" style="left:990px;top:244px;font-family:'Liberation Serif',serif;font-size:9px;color:#bbb"><sup style="font-size:6px">a</sup>a</div>
<div class="a" style="left:1006px;top:245px;width:41px;height:14px;background:linear-gradient(#686868,#565656);border-radius:1px;box-shadow:0 0 0 1px #303030"></div>
<div class="t" style="left:1011px;top:246px;font-size:9px;color:#ececec;">浑厚</div>
<svg class="a" style="left:1039px;top:248px;" width="6" height="9" viewBox="0 0 6 9"><path d="M0.5 3.5h4L2.5 1.2zM0.5 5.5h4L2.5 7.8z" fill="#e0e0e0"/></svg>
<div class="a" style="left:877px;top:263px;width:203px;height:2px;background:#262626;"></div>
<div class="a" style="left:877px;top:265px;width:203px;height:14px;background:#2f2f2f;"></div>
<div class="a" style="left:878px;top:265px;width:47px;height:14px;background:#4a4a4a;"></div>
<div class="t" style="left:884px;top:266px;font-size:9px;color:#ececec;">段落样式</div>
<div class="t" style="left:931px;top:266px;font-size:9px;color:#9a9a9a;">字符样式</div>
<div class="a" style="left:878px;top:280px;width:202px;height:17px;background:#596679;"></div>
<div class="t" style="left:884px;top:282px;font-size:9px;color:#f0f0f0;font-style:italic;transform:skewX(-12deg)">基本段落</div>
<div class="a" style="left:878px;top:297px;width:202px;height:57px;background:#464646;"></div>
<div class="a" style="left:878px;top:354px;width:202px;height:1px;background:#5a5a5a;"></div>
<div class="a" style="left:878px;top:355px;width:202px;height:12px;background:#4a4a4a;"></div>
<svg class="a" style="left:993px;top:357px;" width="10" height="9" viewBox="0 0 10 9"><path d="M2 4a3.5 3.5 0 1 1 1 3.5" stroke="#a0a0a0" stroke-width="1.2" fill="none"/><path d="M0 2l3 3 1-3z" fill="#a0a0a0"/><path d="M2 8.5h7" stroke="#a0a0a0" stroke-width="0.8"/></svg>
<svg class="a" style="left:1016px;top:357px;" width="9" height="9" viewBox="0 0 9 9"><path d="M1 5l2.5 3L8 1" stroke="#a0a0a0" stroke-width="1.4" fill="none"/></svg>
<svg class="a" style="left:1040px;top:357px;" width="9" height="9" viewBox="0 0 9 9"><rect x="0" y="0" width="9" height="8" fill="#ddd"/><path d="M0 3.5h4v4.5" stroke="#555" stroke-width="1" fill="none"/></svg>
<svg class="a" style="left:1062px;top:357px;" width="10" height="9" viewBox="0 0 10 9"><path d="M0.5 2h9M3 2V0.5h4V2M1.5 2.5l0.7 6h5.6l0.7-6M4 3.5v4M6 3.5v4" stroke="#a0a0a0" stroke-width="0.9" fill="none"/></svg>
<div class="a" style="left:877px;top:366px;width:203px;height:1px;background:#262626;"></div>
<div class="a" style="left:877px;top:367px;width:203px;height:16px;background:#2f2f2f;"></div>
<div class="a" style="left:878px;top:367px;width:28px;height:16px;background:#4a4a4a;"></div>
<div class="t" style="left:883px;top:369px;font-size:9px;color:#ececec;">图层</div>
<div class="t" style="left:911px;top:369px;font-size:9px;color:#9a9a9a;">通道</div>
<div class="a" style="left:935px;top:368px;width:1px;height:14px;background:#262626;"></div>
<div class="t" style="left:940px;top:369px;font-size:9px;color:#9a9a9a;">路径</div>
<div class="a" style="left:878px;top:383px;width:202px;height:64px;background:#4a4a4a;"></div>
<div class="a" style="left:882px;top:386px;width:52px;height:14px;background:linear-gradient(#686868,#565656);border-radius:1px;box-shadow:0 0 0 1px #303030"></div>
<svg class="a" style="left:886px;top:389px;" width="8" height="8" viewBox="0 0 8 8"><circle cx="5" cy="3" r="2.3" fill="none" stroke="#ddd" stroke-width="1"/><path d="M3.3 4.7L0.5 7.5" stroke="#ddd" stroke-width="1.1"/></svg>
<div class="t" style="left:896px;top:387px;font-size:9px;color:#ececec;font-weight:bold">类型</div>
<svg class="a" style="left:927px;top:389px;" width="6" height="9" viewBox="0 0 6 9"><path d="M0.5 3.5h4L2.5 1.2zM0.5 5.5h4L2.5 7.8z" fill="#e0e0e0"/></svg>
<svg class="a" style="left:950px;top:389px;" width="12" height="9" viewBox="0 0 12 9"><rect x="0.5" y="0.5" width="10" height="7.5" fill="none" stroke="#b8b8b8"/><path d="M2 7l3-3 2 2 1.5-1.5L10 6v1.5H2z" fill="#b8b8b8"/></svg>
<svg class="a" style="left:969px;top:388px;" width="10" height="10" viewBox="0 0 10 10"><circle cx="5" cy="5" r="4.2" fill="#b8b8b8"/><path d="M1.5 8L8 1.8" stroke="#555" stroke-width="1.4"/></svg>
<svg class="a" style="left:988px;top:388px;" width="8" height="10" viewBox="0 0 8 10"><path d="M0.3 0.5h7.4v2.5H7l-0.4-1.5H4.6v8H5.8V10H2.2V9.5h1.2v-8H1.4L1 3H0.3z" fill="#b8b8b8"/></svg>
<svg class="a" style="left:1006px;top:388px;" width="10" height="10" viewBox="0 0 10 10"><rect x="1.5" y="1.5" width="7" height="7" fill="none" stroke="#b8b8b8" stroke-width="1"/><path d="M0 1.5h3M7 1.5h3M0 8.5h3M7 8.5h3" stroke="#b8b8b8" stroke-width="1"/></svg>
<svg class="a" style="left:1024px;top:388px;" width="10" height="11" viewBox="0 0 10 11"><path d="M3 0.5h4l2 2v4H3z" fill="none" stroke="#b8b8b8" stroke-width="1"/><rect x="0.5" y="5" width="5" height="5.5" fill="#b8b8b8"/></svg>
<div class="a" style="left:1050px;top:387px;width:6px;height:6px;background:#888;"></div>
<div class="a" style="left:1050px;top:393px;width:6px;height:6px;background:#2a2a2a;"></div>
<div class="a" style="left:878px;top:404px;width:202px;height:1px;background:#5c5c5c;"></div>
<div class="a" style="left:882px;top:407px;width:81px;height:14px;background:linear-gradient(#686868,#565656);border-radius:1px;box-shadow:0 0 0 1px #303030"></div>
<div class="t" style="left:887px;top:408px;font-size:9px;color:#ececec;">正常</div>
<svg class="a" style="left:955px;top:410px;" width="6" height="9" viewBox="0 0 6 9"><path d="M0.5 3.5h4L2.5 1.2zM0.5 5.5h4L2.5 7.8z" fill="#e0e0e0"/></svg>
<div class="t" style="left:971px;top:408px;font-size:9px;color:#ececec;">不透明度:</div>
<div class="a" style="left:1015px;top:407px;width:27px;height:14px;background:#2b2b2b;"></div>
<div class="t" style="left:1016px;top:408px;font-size:9px;color:#f0f0f0;letter-spacing:-0.3px">100%</div>
<div class="a" style="left:1042px;top:407px;width:14px;height:14px;background:linear-gradient(#6a6a6a,#585858);"></div>
<svg class="a" style="left:1046px;top:413px;" width="6" height="3" viewBox="0 0 6 3"><path d="M0 0h6l-3 3z" fill="#e0e0e0"/></svg>
<div class="a" style="left:878px;top:424px;width:202px;height:1px;background:#5c5c5c;"></div>
<div class="t" style="left:881px;top:429px;font-size:9px;color:#ececec;">锁定:</div>
<svg class="a" style="left:910px;top:430px;" width="10" height="10" viewBox="0 0 10 10"><rect x="0" y="0" width="5" height="5" fill="#888"/><rect x="5" y="5" width="5" height="5" fill="#888"/><rect x="5" y="0" width="5" height="5" fill="#666"/><rect x="0" y="5" width="5" height="5" fill="#666"/></svg>
<svg class="a" style="left:926px;top:429px;" width="12" height="11" viewBox="0 0 12 11"><path d="M11 0.5L5 7" stroke="#8a8a8a" stroke-width="1.3"/><path d="M0.5 10.5c1-3 3-4 4.5-3 0 2-2.5 3-4.5 3z" fill="#8a8a8a"/></svg>
<svg class="a" style="left:943px;top:429px;" width="12" height="12" viewBox="0 0 12 12"><path d="M6 0.5v11M0.5 6h11M6 0.5L4.3 2.4h3.4zM6 11.5L4.3 9.6h3.4zM0.5 6l1.9-1.7v3.4zM11.5 6L9.6 4.3v3.4z" stroke="#b8b8b8" stroke-width="1.1" fill="#b8b8b8"/></svg>
<svg class="a" style="left:961px;top:429px;" width="9" height="11" viewBox="0 0 9 11"><path d="M2 5V3.2a2.5 2.5 0 0 1 5 0V5" stroke="#b8b8b8" stroke-width="1.2" fill="none"/><rect x="0.5" y="5" width="8" height="6" fill="#b8b8b8"/></svg>
<div class="t" style="left:990px;top:429px;font-size:9px;color:#ececec;">填充:</div>
<div class="a" style="left:1015px;top:428px;width:27px;height:15px;background:#2b2b2b;"></div>
<div class="t" style="left:1016px;top:430px;font-size:9px;color:#f0f0f0;letter-spacing:-0.3px">100%</div>
<div class="a" style="left:1042px;top:428px;width:14px;height:15px;background:linear-gradient(#6a6a6a,#585858);"></div>
<svg class="a" style="left:1046px;top:434px;" width="6" height="3" viewBox="0 0 6 3"><path d="M0 0h6l-3 3z" fill="#e0e0e0"/></svg>
<div class="a" style="left:878px;top:446px;width:202px;height:1px;background:#303030;"></div>
<div class="a" style="left:878px;top:447px;width:202px;height:66px;background:#4a4a4a;"></div>
<div class="a" style="left:901px;top:448px;width:179px;height:65px;background:#586579;"></div>
<div class="a" style="left:878px;top:513px;width:202px;height:1px;background:#3a3a3a;"></div>
<svg class="a" style="left:884px;top:477px;" width="11" height="7" viewBox="0 0 11 7"><ellipse cx="5.5" cy="3.5" rx="5" ry="3" fill="#9a9a9a"/><circle cx="5.5" cy="3.3" r="1.6" fill="#4a4a4a"/></svg>
<div class="a" style="left:903px;top:450px;width:62px;height:61px;background:#222222;"></div>
<div class="a" style="left:904px;top:451px;width:60px;height:59px;background:#ffffff;"></div>
<svg class="a" style="left:902px;top:449px;" width="64" height="63" viewBox="0 0 64 63"><path d="M0.5 12V0.5H20M44 0.5H63.5V12M63.5 50V62.5H44M20 62.5H0.5V50" stroke="#d0d8e4" stroke-width="1.2" fill="none"/><rect x="53" y="51" width="10" height="10" fill="#3a4250"/><rect x="55" y="53" width="6" height="6" fill="none" stroke="#c8c8c8" stroke-width="1"/></svg>
<div class="t" style="left:972px;top:476px;font-size:9px;color:#f0f0f0;">圆角矩形 1</div>
<div class="a" style="left:878px;top:514px;width:202px;height:74px;background:#4a4a4a;"></div>
<div class="a" style="left:903px;top:515px;width:62px;height:63px;background:#383838;"></div>
<svg class="a" style="left:884px;top:544px;" width="11" height="7" viewBox="0 0 11 7"><ellipse cx="5.5" cy="3.5" rx="5" ry="3" fill="#9a9a9a"/><circle cx="5.5" cy="3.3" r="1.6" fill="#4a4a4a"/></svg>
<svg class="a" style="left:1058px;top:540px;" width="9" height="11" viewBox="0 0 9 11"><path d="M2 5V3.2a2.5 2.5 0 0 1 5 0V5" stroke="#9a9a9a" stroke-width="1.2" fill="none"/><rect x="0.5" y="5" width="8" height="6" fill="#9a9a9a"/></svg>
<div class="a" style="left:878px;top:579px;width:202px;height:1px;background:#3a3a3a;"></div>
<div class="t" style="left:774px;top:538px;font-size:26px;color:#ffffff;font-weight:bold;line-height:34px;letter-spacing:1.5px;-webkit-text-stroke:0.8px #fff;text-shadow:1px 1px 0 #111,2px 2px 1px #000,0 0 2px rgba(0,0,0,.6)">头条</div>
<div class="t" style="left:834px;top:539px;font-size:29.5px;color:#ffffff;line-height:34px;letter-spacing:1.8px;text-shadow:1px 1px 0 #111,2px 2px 1px #000,0 0 2px rgba(0,0,0,.6)">@ps</div>
<div class="t" style="left:900px;top:540px;font-size:26.6px;color:#ffffff;line-height:34px;text-shadow:1px 1px 0 #111,2px 2px 1px #000,0 0 2px rgba(0,0,0,.6)">教程电商设计</div>
</body></html>
